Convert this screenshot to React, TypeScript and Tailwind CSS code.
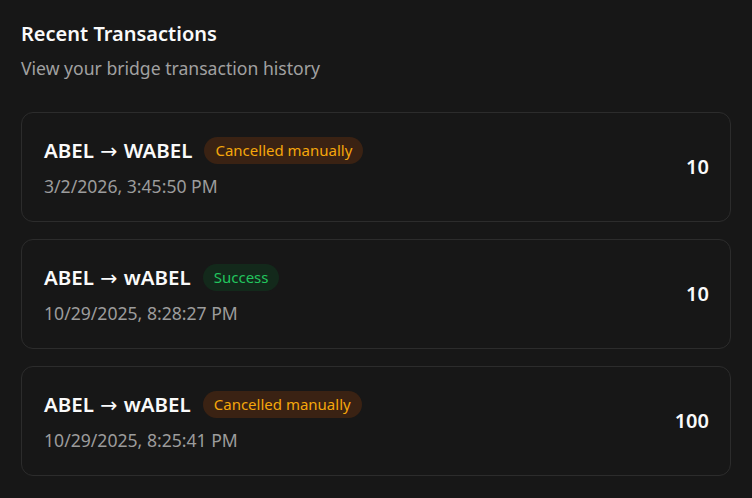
import { useState } from "react";

type Tx = {
  id: number;
  from: string;
  to: string;
  status: "success" | "cancelled";
  date: string;
  amount: string;
};

const transactions: Tx[] = [
  { id: 1, from: "ABEL", to: "WABEL", status: "cancelled", date: "3/2/2026, 3:45:50 PM", amount: "10" },
  { id: 2, from: "ABEL", to: "wABEL", status: "success", date: "10/29/2025, 8:28:27 PM", amount: "10" },
  { id: 3, from: "ABEL", to: "wABEL", status: "cancelled", date: "10/29/2025, 8:25:41 PM", amount: "100" },
];

const StatusBadge = ({ status }: { status: Tx["status"] }) =>
  status === "success" ? (
    <span className="rounded-full bg-[#13291b] px-[11px] h-[27px] flex items-center text-[15px] text-[#22c55e]">
      Success
    </span>
  ) : (
    <span className="rounded-full bg-[#3a2213] px-[11px] h-[27px] flex items-center text-[15px] text-[#f5a70b]">
      Cancelled manually
    </span>
  );

const App = () => {
  const [items] = useState(transactions);

  return (
    <div
      className="min-h-screen bg-[#171717] px-[21px] pt-[20px] pb-6"
      style={{ fontFamily: '"Noto Sans", "Open Sans", sans-serif' }}
    >
      <h2 className="text-[20px] font-semibold leading-[28px] text-[#fafafa]">Recent Transactions</h2>
      <p className="mt-[7px] text-[17.6px] leading-[26px] text-[#a1a1a1]">View your bridge transaction history</p>

      <div className="mt-[31px] flex flex-col gap-[17px]">
        {items.map((tx) => (
          <div
            key={tx.id}
            className="flex h-[110px] items-center justify-between rounded-[12px] border border-[#2c2c2c] pl-[22px] pr-[21px]"
          >
            <div className="flex flex-col gap-[9px]">
              <div className="flex items-center gap-[12px]">
                <span className="text-[20.5px] font-semibold leading-[28px] text-[#fafafa]">
                  {tx.from}{" "}
                  <span className="mx-[1px] font-normal" style={{ fontFamily: '"DejaVu Sans", sans-serif' }}>
                    →
                  </span>{" "}
                  {tx.to}
                </span>
                <StatusBadge status={tx.status} />
              </div>
              <span className="text-[17.6px] leading-[24px] text-[#9c9c9c]">{tx.date}</span>
            </div>
            <span className="text-[20px] font-semibold text-[#fafafa]">{tx.amount}</span>
          </div>
        ))}
      </div>
    </div>
  );
};

export default App;
